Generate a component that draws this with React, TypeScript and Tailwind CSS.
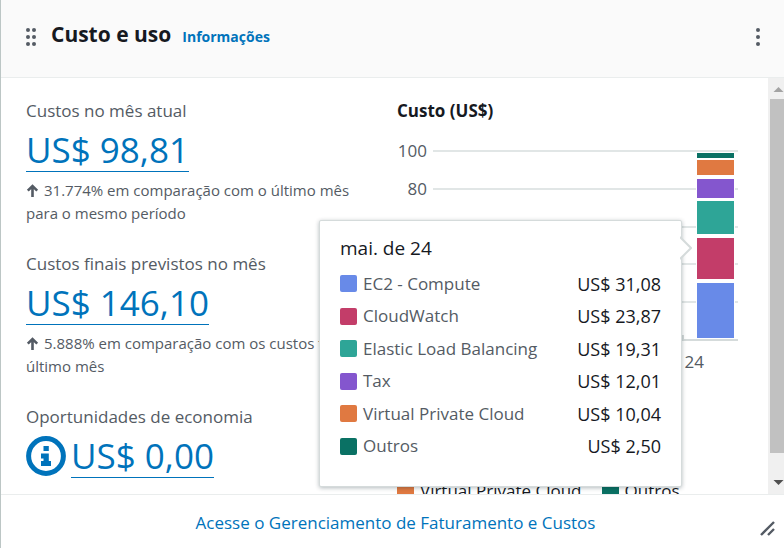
import React from "react";

type Service = { name: string; value: string; dot: string; fill: string; top: number; height: number };

const services: Service[] = [
  { name: "EC2 - Compute", value: "US$ 31,08", dot: "bg-[#688ae8]", fill: "#688ae8", top: 143, height: 55 },
  { name: "CloudWatch", value: "US$ 23,87", dot: "bg-[#c33d69]", fill: "#c33d69", top: 98, height: 41 },
  { name: "Elastic Load Balancing", value: "US$ 19,31", dot: "bg-[#2ea597]", fill: "#2ea597", top: 61, height: 33 },
  { name: "Tax", value: "US$ 12,01", dot: "bg-[#8456ce]", fill: "#8456ce", top: 39, height: 19 },
  { name: "Virtual Private Cloud", value: "US$ 10,04", dot: "bg-[#e07941]", fill: "#e07941", top: 20, height: 15 },
  { name: "Outros", value: "US$ 2,50", dot: "bg-[#0a7164]", fill: "#0a7164", top: 13, height: 5 },
];

const ticks = [
  { label: "100", y: 11 },
  { label: "80", y: 49 },
  { label: "60", y: 87 },
  { label: "40", y: 124 },
  { label: "20", y: 162 },
  { label: "0", y: 200 },
];

function UpArrow() {
  return (
    <svg className="mr-[5px] inline-block align-[-1px]" width="13" height="13" viewBox="0 0 13 13" fill="none" stroke="#545b64" strokeWidth="2.6" aria-hidden="true">
      <path d="M1.8 6.6 6.5 2l4.7 4.6M6.5 2.4V13" />
    </svg>
  );
}

function InfoIcon() {
  return (
    <svg width="40" height="40" viewBox="0 0 40 40" fill="#0073bb" aria-hidden="true">
      <circle cx="20" cy="20" r="17.4" fill="none" stroke="#0073bb" strokeWidth="5" />
      <path d="M17.5 10h5.3v5h-5.3zM15 17.5h7.8V25H25v5H15v-5h2.5v-2.5H15z" />
    </svg>
  );
}

function Metric({ title, amount, note, info }: { title: string; amount: string; note?: [string, string]; info?: boolean }) {
  return (
    <section>
      <h3 className="text-[17px] leading-[22px] text-[#545b64]">{title}</h3>
      <div className="flex h-[50px] items-center gap-[5px] pt-[6px]">
        {info && <InfoIcon />}
        <a href="#" className="border-b border-[#0073bb] text-[35px] leading-[42px] text-[#0073bb]">
          {amount}
        </a>
      </div>
      {note && (
        <p className="mt-[7px] text-[15px] leading-[23px] whitespace-nowrap text-[#545b64]">
          <UpArrow />
          {note[0]}
          <br />
          {note[1]}
        </p>
      )}
    </section>
  );
}

function Chart() {
  return (
    <svg className="block h-[234px] w-full overflow-visible text-[17px]" role="img" aria-label="Custo por mês">
      {ticks.map((t) => (
        <g key={t.label}>
          <text x="30" y={t.y + 6} textAnchor="end" fill="#545b64">
            {t.label}
          </text>
          <line x1="36" x2="100%" y1={t.y} y2={t.y} stroke={t.y === 200 ? "#d5dbdb" : "#e1e6e6"} strokeWidth="2" />
        </g>
      ))}
      <svg x="100%" className="overflow-visible">
        <rect x="-56" y="195" width="2" height="5" fill="#d5dbdb" />
        {services.map((s) => (
          <rect key={s.name} x="-42" y={s.top - 1} width="39" height={s.height + 2} fill="#ffffff" />
        ))}
        {services.map((s) => (
          <rect key={s.name} x="-41" y={s.top} width="37" height={s.height} fill={s.fill} />
        ))}
        <text x="-34" y="228" textAnchor="end" fill="#545b64">
          abr. de 24
        </text>
      </svg>
    </svg>
  );
}

function Tooltip() {
  return (
    <div className="absolute top-[120px] right-[62px] w-[363px] rounded-xs border border-[#d5dbdb] bg-white px-5 pt-[15px] pb-6 shadow-[0_1px_4px_rgba(0,28,36,0.3)]">
      <svg className="absolute top-[15px] -right-[11px]" width="12" height="24" viewBox="0 0 12 24" fill="#ffffff" stroke="#d5dbdb" strokeWidth="2" aria-hidden="true">
        <path d="M0 1l11 11L0 23" />
      </svg>
      <h4 className="text-[19px] leading-6 text-[#16191f]">mai. de 24</h4>
      <dl className="mt-[7px]">
        {services.map((s) => (
          <div key={s.name} className="flex h-[33px] items-center text-[17px] leading-[22px] even:h-8">
            <dt className="flex items-center gap-[6px] text-[#545b64]">
              <span className={`size-[17px] rounded-xs ${s.dot}`} />
              {s.name}
            </dt>
            <dd className="ml-auto text-[18px] text-[#16191f]">{s.value}</dd>
          </div>
        ))}
      </dl>
    </div>
  );
}

function Scrollbar() {
  return (
    <div className="flex w-4 shrink-0 flex-col bg-[#f0f0f0] pl-0.5" aria-hidden="true">
      <svg className="h-[21px] w-full shrink-0" viewBox="0 0 14 21" fill="#a3a3a3">
        <path d="M3.5 14h10L8.5 9z" />
      </svg>
      <div className="h-[354px] bg-[#c1c1c1]" />
      <svg className="mt-auto h-[41px] w-full shrink-0" viewBox="0 0 14 41" fill="#505050">
        <path d="M3.5 27h10l-5 5z" />
      </svg>
    </div>
  );
}

export default function App() {
  return (
    <main className="flex h-screen flex-col overflow-hidden border-l border-[#bcc6c5] bg-white font-['Open_Sans','Noto_Sans',sans-serif]">
      <header className="flex h-[78px] shrink-0 items-center border-b border-[#eaeded] bg-[#fafafa] pr-5 pb-1 pl-[25px]">
        <button type="button" aria-label="Mover widget" className="block">
          <svg width="10" height="18" viewBox="0 0 10 18" fill="#545b64">
            {[2, 9, 16].map((y) => (
              <React.Fragment key={y}>
                <circle cx="2" cy={y} r="2" />
                <circle cx="8" cy={y} r="2" />
              </React.Fragment>
            ))}
          </svg>
        </button>
        <div className="ml-[15px] flex items-baseline gap-[11px] pb-[6px]">
          <h2 className="text-[21px] leading-7 font-bold text-[#16191f]">Custo e uso</h2>
          <a href="#" className="text-[14px] font-bold text-[#0073bb]">
            Informações
          </a>
        </div>
        <button type="button" aria-label="Ações" className="ml-auto block px-1">
          <svg width="4" height="18" viewBox="0 0 4 18" fill="#545b64">
            {[2, 9, 16].map((y) => (
              <circle key={y} cx="2" cy={y} r="2" />
            ))}
          </svg>
        </button>
      </header>

      <div className="flex min-h-0 flex-1">
        <div className="grid min-w-0 flex-1 grid-cols-2 gap-6 overflow-hidden pt-[22px] pr-6 pl-[25px]">
          <div className="flex min-w-0 flex-col gap-[28px]">
            <Metric title="Custos no mês atual" amount="US$ 98,81" note={["31.774% em comparação com o último mês", "para o mesmo período"]} />
            <Metric title="Custos finais previstos no mês" amount="US$ 146,10" note={["5.888% em comparação com os custos totais do", "último mês"]} />
            <Metric title="Oportunidades de economia" amount="US$ 0,00" info />
          </div>
          <div className="relative min-w-0">
            <h3 className="text-[17px] leading-[22px] font-bold text-[#16191f]">Custo (US$)</h3>
            <div className="mt-[18px] pr-[6px]">
              <Chart />
            </div>
            <ul className="mt-[54px] flex flex-wrap gap-x-5 gap-y-1 text-[17px] leading-[22px] text-[#16191f]">
              {services.map((s) => (
                <li key={s.name} className="flex items-center gap-[6px]">
                  <span className={`size-[17px] ${s.dot}`} />
                  {s.name}
                </li>
              ))}
            </ul>
            <Tooltip />
          </div>
        </div>
        <Scrollbar />
      </div>

      <footer className="relative flex h-[54px] shrink-0 items-center justify-center border-t border-[#eaeded] pt-[2px] pl-[6px] text-[17px] leading-[22px]">
        <a href="#" className="text-[#0073bb]">
          Acesse o Gerenciamento de Faturamento e Custos
        </a>
        <button type="button" aria-label="Redimensionar" className="absolute right-2 bottom-3">
          <svg className="block" width="16" height="16" viewBox="0 0 16 16" fill="none" stroke="#545b64" strokeWidth="2.4">
            <path d="M1 15 14 2M8 15l6-6" />
          </svg>
        </button>
      </footer>
    </main>
  );
}
